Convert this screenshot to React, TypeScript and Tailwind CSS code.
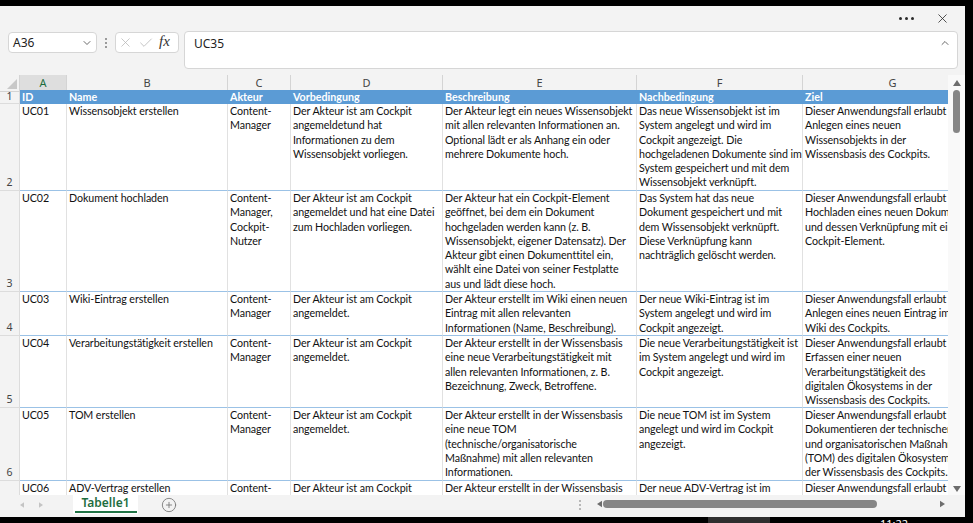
import { ChevronDown, ChevronUp, X, Check, CirclePlus } from 'lucide-react';

type Row = { n: number; h: string; cells: string[][] };

const gridCols = 'grid grid-cols-[20px_47px_161px_63px_152px_194px_166px_180px]';

const letters = ['A', 'B', 'C', 'D', 'E', 'F', 'G'];

const rows: Row[] = [
  {
    n: 2,
    h: 'h-[87px]',
    cells: [
      ['UC01'],
      ['Wissensobjekt erstellen'],
      ['Content-', 'Manager'],
      ['Der Akteur ist am Cockpit', 'angemeldetund hat', 'Informationen zu dem', 'Wissensobjekt vorliegen.'],
      ['Der Akteur legt ein neues Wissensobjekt', 'mit allen relevanten Informationen an.', 'Optional lädt er als Anhang ein oder', 'mehrere Dokumente hoch.'],
      ['Das neue Wissensobjekt ist im', 'System angelegt und wird im', 'Cockpit angezeigt. Die', 'hochgeladenen Dokumente sind im', 'System gespeichert und mit dem', 'Wissensobjekt verknüpft.'],
      ['Dieser Anwendungsfall erlaubt das', 'Anlegen eines neuen', 'Wissensobjekts in der', 'Wissensbasis des Cockpits.'],
    ],
  },
  {
    n: 3,
    h: 'h-[101px]',
    cells: [
      ['UC02'],
      ['Dokument hochladen'],
      ['Content-', 'Manager,', 'Cockpit-', 'Nutzer'],
      ['Der Akteur ist am Cockpit', 'angemeldet und hat eine Datei', 'zum Hochladen vorliegen.'],
      ['Der Akteur hat ein Cockpit-Element', 'geöffnet, bei dem ein Dokument', 'hochgeladen werden kann (z. B.', 'Wissensobjekt, eigener Datensatz). Der', 'Akteur gibt einen Dokumenttitel ein,', 'wählt eine Datei von seiner Festplatte', 'aus und lädt diese hoch.'],
      ['Das System hat das neue', 'Dokument gespeichert und mit', 'dem Wissensobjekt verknüpft.', 'Diese Verknüpfung kann', 'nachträglich gelöscht werden.'],
      ['Dieser Anwendungsfall erlaubt das', 'Hochladen eines neuen Dokuments', 'und dessen Verknüpfung mit einem', 'Cockpit-Element.'],
    ],
  },
  {
    n: 4,
    h: 'h-[44px]',
    cells: [
      ['UC03'],
      ['Wiki-Eintrag erstellen'],
      ['Content-', 'Manager'],
      ['Der Akteur ist am Cockpit', 'angemeldet.'],
      ['Der Akteur erstellt im Wiki einen neuen', 'Eintrag mit allen relevanten', 'Informationen (Name, Beschreibung).'],
      ['Der neue Wiki-Eintrag ist im', 'System angelegt und wird im', 'Cockpit angezeigt.'],
      ['Dieser Anwendungsfall erlaubt das', 'Anlegen eines neuen Eintrag im', 'Wiki des Cockpits.'],
    ],
  },
  {
    n: 5,
    h: 'h-[72px]',
    cells: [
      ['UC04'],
      ['Verarbeitungstätigkeit erstellen'],
      ['Content-', 'Manager'],
      ['Der Akteur ist am Cockpit', 'angemeldet.'],
      ['Der Akteur erstellt in der Wissensbasis', 'eine neue Verarbeitungstätigkeit mit', 'allen relevanten Informationen, z. B.', 'Bezeichnung, Zweck, Betroffene.'],
      ['Die neue Verarbeitungstätigkeit ist', 'im System angelegt und wird im', 'Cockpit angezeigt.'],
      ['Dieser Anwendungsfall erlaubt das', 'Erfassen einer neuen', 'Verarbeitungstätigkeit des', 'digitalen Ökosystems in der', 'Wissensbasis des Cockpits.'],
    ],
  },
  {
    n: 6,
    h: 'h-[73px]',
    cells: [
      ['UC05'],
      ['TOM erstellen'],
      ['Content-', 'Manager'],
      ['Der Akteur ist am Cockpit', 'angemeldet.'],
      ['Der Akteur erstellt in der Wissensbasis', 'eine neue TOM', '(technische/organisatorische', 'Maßnahme) mit allen relevanten', 'Informationen.'],
      ['Die neue TOM ist im System', 'angelegt und wird im Cockpit', 'angezeigt.'],
      ['Dieser Anwendungsfall erlaubt das', 'Dokumentieren der technischen', 'und organisatorischen Maßnahmen', '(TOM) des digitalen Ökosystems in', 'der Wissensbasis des Cockpits.'],
    ],
  },
  {
    n: 7,
    h: 'h-[72px]',
    cells: [
      ['UC06'],
      ['ADV-Vertrag erstellen'],
      ['Content-', 'Manager'],
      ['Der Akteur ist am Cockpit', 'angemeldet.'],
      ['Der Akteur erstellt in der Wissensbasis', 'einen neuen ADV-Vertrag.'],
      ['Der neue ADV-Vertrag ist im', 'System angelegt.'],
      ['Dieser Anwendungsfall erlaubt das', 'Anlegen eines ADV-Vertrags.'],
    ],
  },
];

const header = ['ID', 'Name', 'Akteur', 'Vorbedingung', 'Beschreibung', 'Nachbedingung', 'Ziel'];

function Tri({ dir, className }: { dir: 'l' | 'r' | 'u' | 'd'; className: string }) {
  const pts = { l: '6,0 6,8 0,4', r: '0,0 0,8 6,4', u: '0,6 8,6 4,0', d: '0,0 8,0 4,6' }[dir];
  const box = dir === 'l' || dir === 'r' ? '0 0 6 8' : '0 0 8 6';
  return (
    <svg viewBox={box} className={className} fill="currentColor">
      <polygon points={pts} />
    </svg>
  );
}

function VDots({ className }: { className: string }) {
  return (
    <svg viewBox="0 0 2 10" className={className} fill="currentColor">
      <rect x="0" y="0" width="2" height="2" />
      <rect x="0" y="4" width="2" height="2" />
      <rect x="0" y="8" width="2" height="2" />
    </svg>
  );
}

export default function App() {
  return (
    <div className="w-[973px] h-[523px] bg-black flex flex-col overflow-hidden font-['Noto_Sans',sans-serif]">
      <div className="h-[6px] shrink-0" />
      <div className="flex h-[511px] shrink-0">
        <div className="w-[965px] h-full bg-[#f3f3f3] flex flex-col">
          {/* title bar */}
          <div className="h-[25px] shrink-0 flex items-center justify-end pr-[15px] gap-[21px] text-[#2b2b2b]">
            <div className="flex gap-[3px] items-center">
              <span className="w-[3px] h-[3px] rounded-full bg-[#2b2b2b]" />
              <span className="w-[3px] h-[3px] rounded-full bg-[#2b2b2b]" />
              <span className="w-[3px] h-[3px] rounded-full bg-[#2b2b2b]" />
            </div>
            <X className="w-[15px] h-[15px]" strokeWidth={1.3} />
          </div>

          {/* formula row */}
          <div className="h-[39px] shrink-0 flex items-start pl-[8px]">
            <div className="mt-[1px] w-[89px] h-[21px] bg-white border border-[#d6d6d6] rounded-[4px] flex items-center justify-between pl-[4px] pr-[3px] text-[12px] text-[#222]">
              <span>A36</span>
              <ChevronDown className="w-[12px] h-[12px] text-[#444]" strokeWidth={1.6} />
            </div>
            <VDots className="w-[2px] h-[10px] mt-[7px] ml-[8px] text-[#9a9a9a]" />
            <div className="mt-[1px] ml-[8px] w-[64px] h-[21px] bg-white border border-[#d6d6d6] rounded-[4px] flex items-center pl-[2px] gap-[5px]">
              <X className="w-[15px] h-[15px] text-[#b5b5b5]" strokeWidth={1.2} />
              <Check className="w-[16px] h-[16px] text-[#b5b5b5]" strokeWidth={1.2} />
              <span className="font-['Liberation_Serif',serif] italic text-[15px] leading-none text-[#333] -mt-[2px]">fx</span>
            </div>
            <div className="ml-[5px] w-[774px] h-[38px] bg-white border border-[#d6d6d6] rounded-[4px] flex items-start justify-between pl-[9px] pr-[6px] pt-[3px] text-[12px] text-[#222]">
              <span>UC35</span>
              <ChevronUp className="w-[12px] h-[12px] mt-[2px] text-[#444]" strokeWidth={1.6} />
            </div>
          </div>
          <div className="h-[5px] shrink-0" />

          {/* sheet */}
          <div className="h-[420px] shrink-0 flex overflow-hidden">
            <div className="w-[948px] h-[420px] overflow-hidden bg-white">
              <div className={`${gridCols} h-[15px] bg-[#f3f3f3] text-[11px] text-[#444] leading-[15px]`}>
                <div className="relative border-r border-b border-[#d4d4d4]">
                  <svg viewBox="0 0 10 10" className="absolute right-[2px] bottom-[2px] w-[10px] h-[10px] text-[#c8c8c8]" fill="currentColor">
                    <polygon points="10,0 10,10 0,10" />
                  </svg>
                </div>
                {letters.map((l, i) => (
                  <div
                    key={l}
                    className={
                      i === 0
                        ? 'bg-[#dedede] text-[#1e6e3f] border-r border-[#d4d4d4] border-b-2 border-b-[#217346] text-center'
                        : 'border-r border-b border-[#d4d4d4] text-center'
                    }
                  >
                    {l}
                  </div>
                ))}
              </div>

              <div className={`${gridCols} h-[14px] font-['Lato',sans-serif] text-[10.7px] leading-[14px]`}>
                <div className="bg-[#f3f3f3] border-r border-b border-[#dcdcdc] flex items-end justify-center text-[#444] font-['Noto_Sans',sans-serif] text-[10.5px] leading-[13px]">
                  1
                </div>
                {header.map((t) => (
                  <div key={t} className="bg-[#5b9bd5] text-white font-bold px-[2px] whitespace-nowrap overflow-hidden">
                    {t}
                  </div>
                ))}
              </div>

              {rows.map((r) => (
                <div key={r.n} className={`${gridCols} ${r.h} font-['Lato',sans-serif] text-[10.7px] leading-[14.3px] tracking-[-0.08px] text-[#111]`}>
                  <div className="bg-[#f3f3f3] border-r border-b border-[#dcdcdc] flex items-end justify-center pb-[1px] text-[#444] font-['Noto_Sans',sans-serif] text-[10.5px] leading-[13px] tracking-normal">
                    {r.n}
                  </div>
                  {r.cells.map((lines, i) => (
                    <div key={i} className="border-r border-r-[#e1e1e1] border-b border-b-[#9bc2e6] px-[2px] overflow-hidden">
                      {lines.map((line, j) => (
                        <div key={j} className="whitespace-nowrap">
                          {line}
                        </div>
                      ))}
                    </div>
                  ))}
                </div>
              ))}
            </div>

            {/* vertical scrollbar */}
            <div className="w-[17px] bg-[#f9f9f9] flex flex-col items-center text-[#6d6d6d]">
              <Tri dir="u" className="w-[8px] h-[6px] mt-[5px]" />
              <div className="w-[7px] h-[43px] mt-[4px] rounded-full bg-[#868686]" />
              <div className="flex-1" />
              <Tri dir="d" className="w-[8px] h-[6px] mb-[3px]" />
            </div>
          </div>

          {/* bottom bar */}
          <div className="h-[22px] shrink-0 flex items-start">
            <div className="w-[73px] h-[19px] flex items-center pl-[20px] gap-[15px] text-[#c4c4c4]">
              <Tri dir="l" className="w-[4px] h-[6px]" />
              <Tri dir="r" className="w-[4px] h-[6px]" />
            </div>
            <div className="w-[65px] h-[19px] bg-white flex flex-col items-center">
              <span className="text-[12px] leading-[16px] font-semibold text-[#1e6e3f]">Tabelle1</span>
              <span className="w-[62px] h-[2px] bg-[#217346]" />
            </div>
            <CirclePlus className="w-[16px] h-[16px] ml-[23px] mt-[2px] text-[#777]" strokeWidth={1.3} />
            <div className="flex-1" />
            <VDots className="w-[2px] h-[10px] mt-[5px] text-[#b8b8b8]" />
            <Tri dir="l" className="w-[5px] h-[8px] mt-[5px] ml-[16px] text-[#6d6d6d]" />
            <div className="w-[274px] h-[8px] mt-[5px] ml-[1px] rounded-full bg-[#868686]" />
            <div className="w-[63px]" />
            <Tri dir="r" className="w-[5px] h-[8px] mt-[5px] text-[#6d6d6d]" />
            <div className="w-[20px]" />
          </div>
        </div>
        <div className="flex-1" />
      </div>
      <div className="h-[6px] shrink-0 flex overflow-hidden">
        <div className="w-[708px]" />
        <div className="w-[62px] h-full bg-[#2e2e2e]" />
        <div className="w-[110px]" />
        <span className="text-white text-[11px] leading-[10px] pt-[2px]">11:22</span>
      </div>
    </div>
  );
}
